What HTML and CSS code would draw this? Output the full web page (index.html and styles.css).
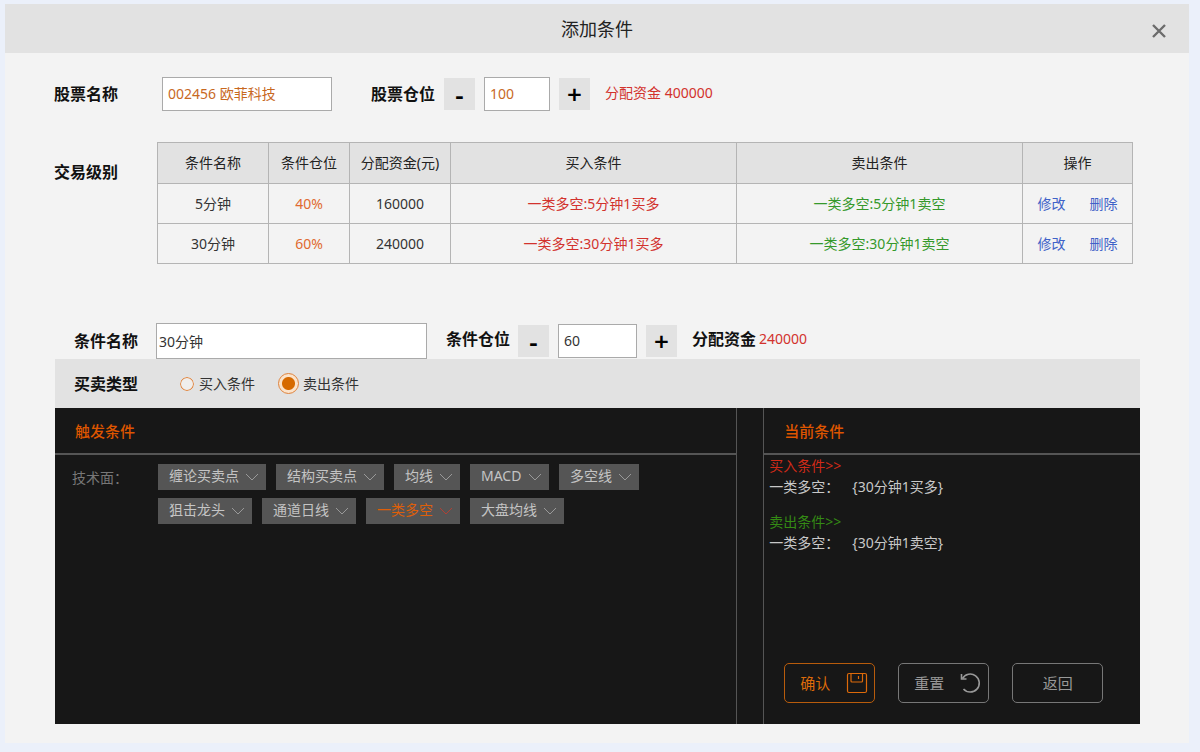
FILE: index.html
```html
<!DOCTYPE html>
<html lang="zh-CN">
<head>
<meta charset="utf-8">
<title>添加条件</title>
<link rel="stylesheet" href="styles.css">
</head>
<body>
<main class="dialog">
  <header class="dialog-header">
    <h1 class="dialog-title">添加条件</h1>
    <button class="close" type="button" aria-label="关闭">
      <svg width="16" height="16" viewBox="0 0 16 16"><path d="M2 2 14 14M14 2 2 14" fill="none" stroke="#6c6c6c" stroke-width="2.4"/></svg>
    </button>
  </header>

  <section class="stock">
    <div class="row">
      <label class="label label-col" for="stock">股票名称</label>
      <input class="field field-stock" id="stock" type="text" value="002456 欧菲科技">
      <label class="label label-position" for="stock-pos">股票仓位</label>
      <div class="stepper">
        <button class="step" type="button" aria-label="减少">-</button>
        <input class="field field-pos" id="stock-pos" type="text" value="100">
        <button class="step" type="button" aria-label="增加">+</button>
      </div>
      <span class="fund">分配资金 400000</span>
    </div>
    <div class="levels">
      <span class="label label-level" id="levels-label">交易级别</span>
      <table class="table" aria-labelledby="levels-label">
        <colgroup><col class="c-name"><col class="c-pos"><col class="c-fund"><col><col><col class="c-ops"></colgroup>
        <thead>
          <tr><th>条件名称</th><th>条件仓位</th><th>分配资金(元)</th><th>买入条件</th><th>卖出条件</th><th>操作</th></tr>
        </thead>
        <tbody>
          <tr><td>5分钟</td><td class="orange">40%</td><td>160000</td><td class="buy">一类多空:5分钟1买多</td><td class="sell">一类多空:5分钟1卖空</td><td><span class="ops"><a href="#">修改</a><a href="#">删除</a></span></td></tr>
          <tr><td>30分钟</td><td class="orange">60%</td><td>240000</td><td class="buy">一类多空:30分钟1买多</td><td class="sell">一类多空:30分钟1卖空</td><td><span class="ops"><a href="#">修改</a><a href="#">删除</a></span></td></tr>
        </tbody>
      </table>
    </div>
  </section>

  <section class="editor">
    <div class="row row-editor">
      <label class="label label-name" for="name">条件名称</label>
      <input class="field field-name" id="name" type="text" value="30分钟">
      <label class="label label-cond" for="cond-pos">条件仓位</label>
      <div class="stepper">
        <button class="step" type="button" aria-label="减少">-</button>
        <input class="field field-cond" id="cond-pos" type="text" value="60">
        <button class="step" type="button" aria-label="增加">+</button>
      </div>
      <span class="label label-fund">分配资金</span>
      <span class="amount">240000</span>
    </div>
    <div class="type-bar">
      <span class="label label-type">买卖类型</span>
      <label class="choice"><input class="radio" type="radio" name="side">买入条件</label>
      <label class="choice choice-sell"><input class="radio" type="radio" name="side" checked>卖出条件</label>
    </div>
    <div class="panes">
      <section class="pane pane-left">
        <h2 class="pane-title">触发条件</h2>
        <div class="tech">
          <span class="tech-label">技术面：</span>
          <div class="chips">
            <div class="chip-row">
              <span class="chip"><select aria-label="缠论买卖点"><option>缠论买卖点</option></select><svg class="chev" viewBox="0 0 14 8"><path d="M1 1 7 7 13 1"/></svg></span>
              <span class="chip"><select aria-label="结构买卖点"><option>结构买卖点</option></select><svg class="chev" viewBox="0 0 14 8"><path d="M1 1 7 7 13 1"/></svg></span>
              <span class="chip"><select aria-label="均线"><option>均线</option></select><svg class="chev" viewBox="0 0 14 8"><path d="M1 1 7 7 13 1"/></svg></span>
              <span class="chip"><select aria-label="MACD"><option>MACD</option></select><svg class="chev" viewBox="0 0 14 8"><path d="M1 1 7 7 13 1"/></svg></span>
              <span class="chip"><select aria-label="多空线"><option>多空线</option></select><svg class="chev" viewBox="0 0 14 8"><path d="M1 1 7 7 13 1"/></svg></span>
            </div>
            <div class="chip-row">
              <span class="chip"><select aria-label="狙击龙头"><option>狙击龙头</option></select><svg class="chev" viewBox="0 0 14 8"><path d="M1 1 7 7 13 1"/></svg></span>
              <span class="chip"><select aria-label="通道日线"><option>通道日线</option></select><svg class="chev" viewBox="0 0 14 8"><path d="M1 1 7 7 13 1"/></svg></span>
              <span class="chip chip-active"><select aria-label="一类多空"><option>一类多空</option></select><svg class="chev" viewBox="0 0 14 8"><path d="M1 1 7 7 13 1"/></svg></span>
              <span class="chip"><select aria-label="大盘均线"><option>大盘均线</option></select><svg class="chev" viewBox="0 0 14 8"><path d="M1 1 7 7 13 1"/></svg></span>
            </div>
          </div>
        </div>
      </section>
      <section class="pane pane-right">
        <h2 class="pane-title">当前条件</h2>
        <div class="current">
          <div>
            <div class="current-buy">买入条件&gt;&gt;</div>
            <div class="current-line"><span>一类多空：</span><span>{30分钟1买多}</span></div>
          </div>
          <div>
            <div class="current-sell">卖出条件&gt;&gt;</div>
            <div class="current-line"><span>一类多空：</span><span>{30分钟1卖空}</span></div>
          </div>
        </div>
        <div class="actions">
          <button class="action action-ok" type="button">确认
            <svg width="22" height="22" viewBox="0 0 22 22" fill="none" stroke="currentColor" stroke-width="1.2"><rect x="1.500" y="1.500" width="19" height="19" rx="1.500"/><path d="M5 1.500V9Q5 10 6 10H15.500Q16.500 10 16.500 9V1.500M12.500 4V7"/></svg>
          </button>
          <button class="action" type="button">重置
            <svg width="22" height="22" viewBox="0 0 22 22" fill="none" stroke="currentColor" stroke-width="1.6"><path d="M2.500 6.500 A9 9 0 1 1 3.500 17"/><path d="M1.500 2V7H6.500"/></svg>
          </button>
          <button class="action action-back" type="button">返回</button>
        </div>
      </section>
    </div>
  </section>
</main>
</body>
</html>
```

FILE: styles.css
```css
* { box-sizing: border-box; }

body {
  margin: 0;
  padding: 4px 11px 9px 5px;
  min-height: 100vh;
  display: flex;
  background: #ebf0fa;
  color: #333;
  font: 14px/20px "Noto Sans", "Noto Sans CJK SC", sans-serif;
}

input, button, select { font: inherit; color: inherit; margin: 0; }

.dialog {
  flex: 1;
  min-width: 0;
  display: flex;
  flex-direction: column;
  background: #f3f3f3;
}

.dialog-header {
  display: grid;
  grid-template-columns: 1fr auto 1fr;
  align-items: center;
  height: 49px;
  padding: 0 22px;
  background: #e2e2e2;
}
.dialog-title {
  grid-column: 2;
  margin: 0;
  font-size: 18px;
  line-height: 24px;
  font-weight: 400;
  color: #222;
}
.close {
  justify-self: end;
  display: flex;
  padding: 4px 0 0;
  border: 0;
  background: none;
}

.label { font-size: 16px; line-height: 24px; font-weight: 700; color: #111; white-space: nowrap; }

.row { display: flex; align-items: center; }

.field {
  height: 34px;
  padding: 0 5px 2px;
  border: 1px solid #aaa;
  background: #fff;
}

.stepper { display: flex; align-items: center; gap: 9px; }
.step {
  width: 31px;
  height: 32px;
  padding: 0;
  border: 0;
  background: #e2e2e2;
  color: #000;
  font-size: 26px;
  line-height: 32px;
  font-weight: 600;
}

.stock { padding: 24px 56px 0 49px; }
.label-col { width: 108px; }
.field-stock { width: 170px; color: #c8691f; }
.label-position { margin: 0 9px 0 39px; }
.field-pos { width: 66px; color: #c8691f; }
.fund { margin-left: 15px; padding-bottom: 2px; color: #d2322d; }

.levels { display: flex; align-items: flex-start; margin-top: 31px; }
.label-level { width: 103px; padding-top: 18px; }
.table {
  flex: 1;
  width: 0;
  table-layout: fixed;
  border-collapse: collapse;
  text-align: center;
}
.table th, .table td { padding: 0; border: 1px solid #b4b4b4; font-weight: 400; }
.table thead tr { height: 41px; }
.table tbody tr { height: 40px; }
.table th { background: #e2e2e2; color: #222; }
.c-name { width: 111px; }
.c-pos { width: 81px; }
.c-fund { width: 101px; }
.c-ops { width: 110px; }
.table .orange { color: #e06a30; }
.table .buy { color: #d2322d; }
.table .sell { color: #35992b; }
.ops { display: flex; justify-content: center; gap: 24px; }
.ops a { color: #3f62c8; text-decoration: none; }

.editor {
  flex: 1;
  display: flex;
  flex-direction: column;
  padding: 59px 49px 19px 50px;
}
.row-editor { padding-left: 19px; }
.label-name { width: 82px; }
.field-name { width: 271px; height: 36px; padding: 0 2px; }
.label-cond { margin: 0 8px 0 19px; }
.field-cond { width: 79px; }
.label-fund { margin-left: 15px; }
.amount { margin-left: 3px; color: #d2322d; }
.row-editor .label-fund, .row-editor .amount, .label-cond { padding-bottom: 4px; }

.type-bar {
  display: flex;
  align-items: center;
  height: 49px;
  padding-left: 19px;
  background: #e2e2e2;
}
.label-type { width: 104px; }
.choice { display: flex; align-items: center; gap: 3px; color: #333; }
.choice-sell { margin-left: 23px; gap: 4px; }
.radio {
  appearance: none;
  width: 18px;
  height: 18px;
  border: 2px solid #e2e2e2;
  border-radius: 50%;
  background: #f0eeec;
  box-shadow: inset 0 0 0 1px #e0833c;
}
.radio:checked {
  width: 21px;
  height: 21px;
  border: 1px solid #e0833c;
  box-shadow: none;
  background: radial-gradient(circle, #d66a00 0 6px, #fbe3cb 7px);
}

.panes {
  flex: 1;
  display: grid;
  grid-template-columns: 683fr 377fr;
  column-gap: 26px;
  background: #171717;
}
.pane { display: flex; flex-direction: column; min-width: 0; }
.pane-left { border-right: 1px solid #555; }
.pane-right { border-left: 1px solid #555; }
.pane-title {
  margin: 0;
  height: 47px;
  padding: 12px 20px 0;
  border-bottom: 2px solid #555;
  font-size: 15px;
  line-height: 22px;
  font-weight: 500;
  color: #dd5500;
}

.tech { display: flex; padding: 9px 0 0 17px; }
.tech-label { width: 86px; padding-top: 4px; color: #777; }
.chips { display: grid; gap: 8px; }
.chip-row { display: flex; gap: 10px; }
.chip { display: grid; align-items: center; background: #555; color: #c4c4c4; }
.chip > * { grid-area: 1 / 1; }
.chip select {
  appearance: none;
  height: 26px;
  padding: 0 27px 2px 11px;
  border: 0;
  border-radius: 0;
  background: none;
}
.chev {
  justify-self: end;
  width: 14px;
  height: 8px;
  margin-right: 7px;
  fill: none;
  stroke: #999;
  pointer-events: none;
}
.chip-active { color: #dd5f0a; }
.chip-active .chev { stroke: #b04034; }

.current { flex: 1; display: flex; flex-direction: column; gap: 14px; padding-left: 5px; line-height: 21px; }
.current-buy { color: #d02a18; }
.current-sell { color: #348a14; }
.current-line { display: flex; gap: 13px; color: #c8c8c8; }

.actions { display: flex; gap: 23px; padding: 0 20px 21px; }
.action {
  display: flex;
  align-items: center;
  justify-content: space-between;
  width: 91px;
  height: 40px;
  padding: 0 6px 0 15px;
  border: 1px solid #777;
  border-radius: 5px;
  background: none;
  color: #999;
  font-size: 15px;
}
.action-ok { border-color: #b85c0c; color: #dd6a0a; }
.action-back { justify-content: center; padding: 0; }
```
